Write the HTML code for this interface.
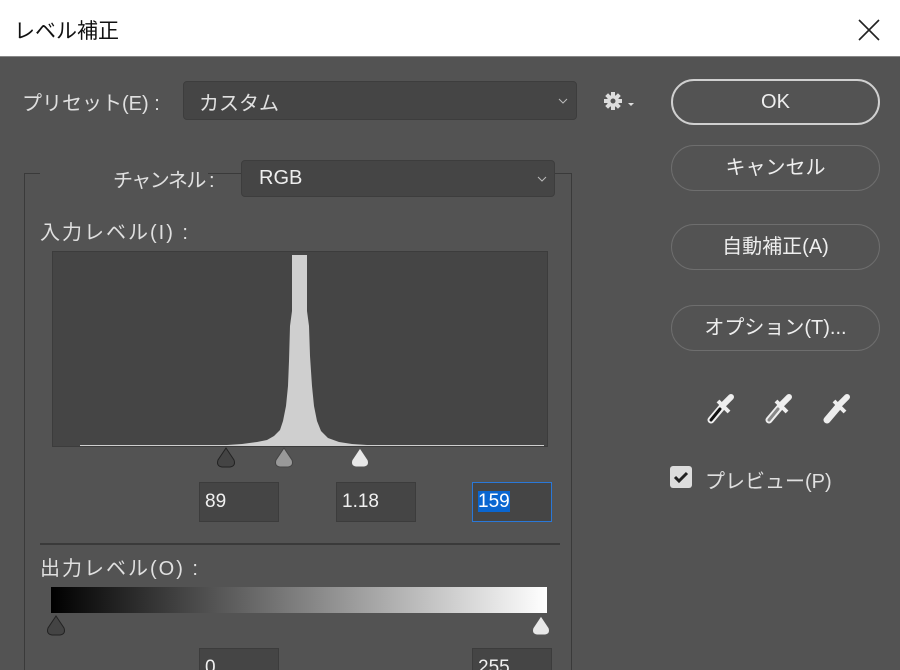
<!DOCTYPE html>
<html><head><meta charset="utf-8"><style>
*{margin:0;padding:0;box-sizing:border-box}
html,body{width:900px;height:670px;overflow:hidden}
body{background:#535353;font-family:"Liberation Sans","Noto Sans CJK JP",sans-serif;color:#e6e6e6;position:relative}
.a{position:absolute}
.title{left:0;top:0;width:900px;height:57px;background:#fff;border-bottom:1px solid #888}
.lbl{font-size:20px;color:#e0e0e0;white-space:nowrap}
.dd{background:#454545;border:1px solid #3d3d3d;border-radius:4px}
.btn{border:1px solid #6e6e6e;border-radius:23px;text-align:center;font-size:20px;color:#eee;width:209px;height:46px;line-height:44px;left:671px}
.inp{background:#454545;border:1px solid #3c3c3c;font-size:19px;color:#f0f0f0;padding-left:5px;line-height:38px;height:40px;width:80px}
</style></head><body>
<div class="a title"></div>
<div class="a" style="left:14px;top:15px;font-size:21px;color:#111">レベル補正</div>
<svg class="a" style="left:858px;top:19px" width="22" height="22"><path d="M1 1L21 21M21 1L1 21" stroke="#222" stroke-width="1.6"/></svg>

<div class="a lbl" style="left:22px;top:87px">プリセット(E) :</div>
<div class="a dd" style="left:183px;top:81px;width:394px;height:39px"></div>
<div class="a lbl" style="left:199px;top:87px">カスタム</div>
<svg class="a" style="left:558px;top:98px" width="10" height="6"><path d="M1 1L5 5L9 1" stroke="#bbb" fill="none"/></svg>
<svg class="a" style="left:602px;top:90px" width="36" height="22"><g fill="#ddd"><circle cx="11" cy="11" r="6"/><rect x="9" y="2" width="4" height="18"/><rect x="2" y="9" width="18" height="4"/><rect x="9" y="2" width="4" height="18" transform="rotate(45 11 11)"/><rect x="9" y="2" width="4" height="18" transform="rotate(-45 11 11)"/></g><circle cx="11" cy="11" r="2.5" fill="#535353"/><path d="M26 13h6l-3 3z" fill="#ddd"/></svg>

<div class="a btn" style="top:79px;border:2px solid #d0d0d0;line-height:42px">OK</div>
<div class="a btn" style="top:145px">キャンセル</div>
<div class="a btn" style="top:224px">自動補正(A)</div>
<div class="a btn" style="top:305px">オプション(T)...</div>

<svg class="a" style="left:700px;top:392px" width="160" height="32">
<g transform="translate(4,0)"><path d="M7 28L18 15" stroke="#eee" stroke-width="7" stroke-linecap="round"/><path d="M7 28L16 17" stroke="#111" stroke-width="3" stroke-linecap="round"/><path d="M14 9L25 20" stroke="#eee" stroke-width="4"/><path d="M20 12L27 5" stroke="#eee" stroke-width="6" stroke-linecap="round"/></g>
<g transform="translate(62,0)"><path d="M7 28L18 15" stroke="#eee" stroke-width="7" stroke-linecap="round"/><path d="M7 28L16 17" stroke="#888" stroke-width="3" stroke-linecap="round"/><path d="M14 9L25 20" stroke="#eee" stroke-width="4"/><path d="M20 12L27 5" stroke="#eee" stroke-width="6" stroke-linecap="round"/></g>
<g transform="translate(120,0)"><path d="M7 28L18 15" stroke="#eee" stroke-width="7" stroke-linecap="round"/><path d="M14 9L25 20" stroke="#eee" stroke-width="4"/><path d="M20 12L27 5" stroke="#eee" stroke-width="6" stroke-linecap="round"/></g>
</svg>
<div class="a" style="left:670px;top:466px;width:22px;height:22px;background:#ddd;border-radius:3px"></div>
<svg class="a" style="left:670px;top:466px" width="22" height="22"><path d="M5 11L9 15L17 7" stroke="#222" stroke-width="3" fill="none"/></svg>
<div class="a lbl" style="left:705px;top:465px">プレビュー(P)</div>

<div class="a" style="left:24px;top:173px;width:548px;height:520px;border:1px solid #3a3a3a;border-bottom:none"></div>
<div class="a" style="left:40px;top:170px;width:168px;height:6px;background:#535353"></div>
<div class="a lbl" style="left:113px;top:164px;letter-spacing:-1.5px">チャンネル :</div>
<div class="a dd" style="left:241px;top:160px;width:314px;height:37px"></div>
<div class="a" style="left:259px;top:167px;font-size:20px;color:#eee">RGB</div>
<svg class="a" style="left:537px;top:176px" width="10" height="6"><path d="M1 1L5 5L9 1" stroke="#bbb" fill="none"/></svg>

<div class="a lbl" style="left:40px;top:216px;letter-spacing:2px">入力レベル(I) :</div>
<svg class="a" style="left:52px;top:251px" width="496" height="196">
<rect x="0.5" y="0.5" width="495" height="195" fill="#454545" stroke="#3c3c3c"/>
<polygon fill="#cfcfcf" points="28,194 175,194 190,193 205,191 215,189 222,185 228,179 231,170 234,155 236,135 237,110 238,75 240,60 240,4 255,4 255,60 257,75 258,105 260,135 262,155 265,170 269,180 276,187 287,191 300,193 315,194 492,194 492,195 28,195"/>
</svg>
<svg class="a" style="left:212px;top:446px" width="160" height="24">
<path d="M14 2L22 14Q24 20 18 21L10 21Q4 20 6 14Z" fill="#444" stroke="#222"/>
<path d="M72 2L80 14Q82 20 76 21L68 21Q62 20 64 14Z" fill="#999" stroke="#444"/>
<path d="M148 2L156 14Q158 20 152 21L144 21Q138 20 140 14Z" fill="#e8e8e8" stroke="#555"/>
</svg>
<div class="a inp" style="left:199px;top:482px">89</div>
<div class="a inp" style="left:336px;top:482px">1.18</div>
<div class="a inp" style="left:472px;top:482px;border:1px solid #2a78d8"><span style="background:#0a66d0;color:#fff">159</span></div>
<div class="a" style="left:40px;top:543px;width:520px;height:2px;background:#3a3a3a"></div>
<div class="a lbl" style="left:40px;top:552px;letter-spacing:2px">出力レベル(O) :</div>
<div class="a" style="left:51px;top:587px;width:496px;height:26px;background:linear-gradient(to right,#000,#fff)"></div>
<svg class="a" style="left:44px;top:614px" width="510" height="24">
<path d="M12 2L20 14Q22 20 16 21L8 21Q2 20 4 14Z" fill="#444" stroke="#222"/>
<path d="M497 2L505 14Q507 20 501 21L493 21Q487 20 489 14Z" fill="#e8e8e8" stroke="#555"/>
</svg>
<div class="a inp" style="left:199px;top:648px">0</div>
<div class="a inp" style="left:472px;top:648px">255</div>
</body></html>
